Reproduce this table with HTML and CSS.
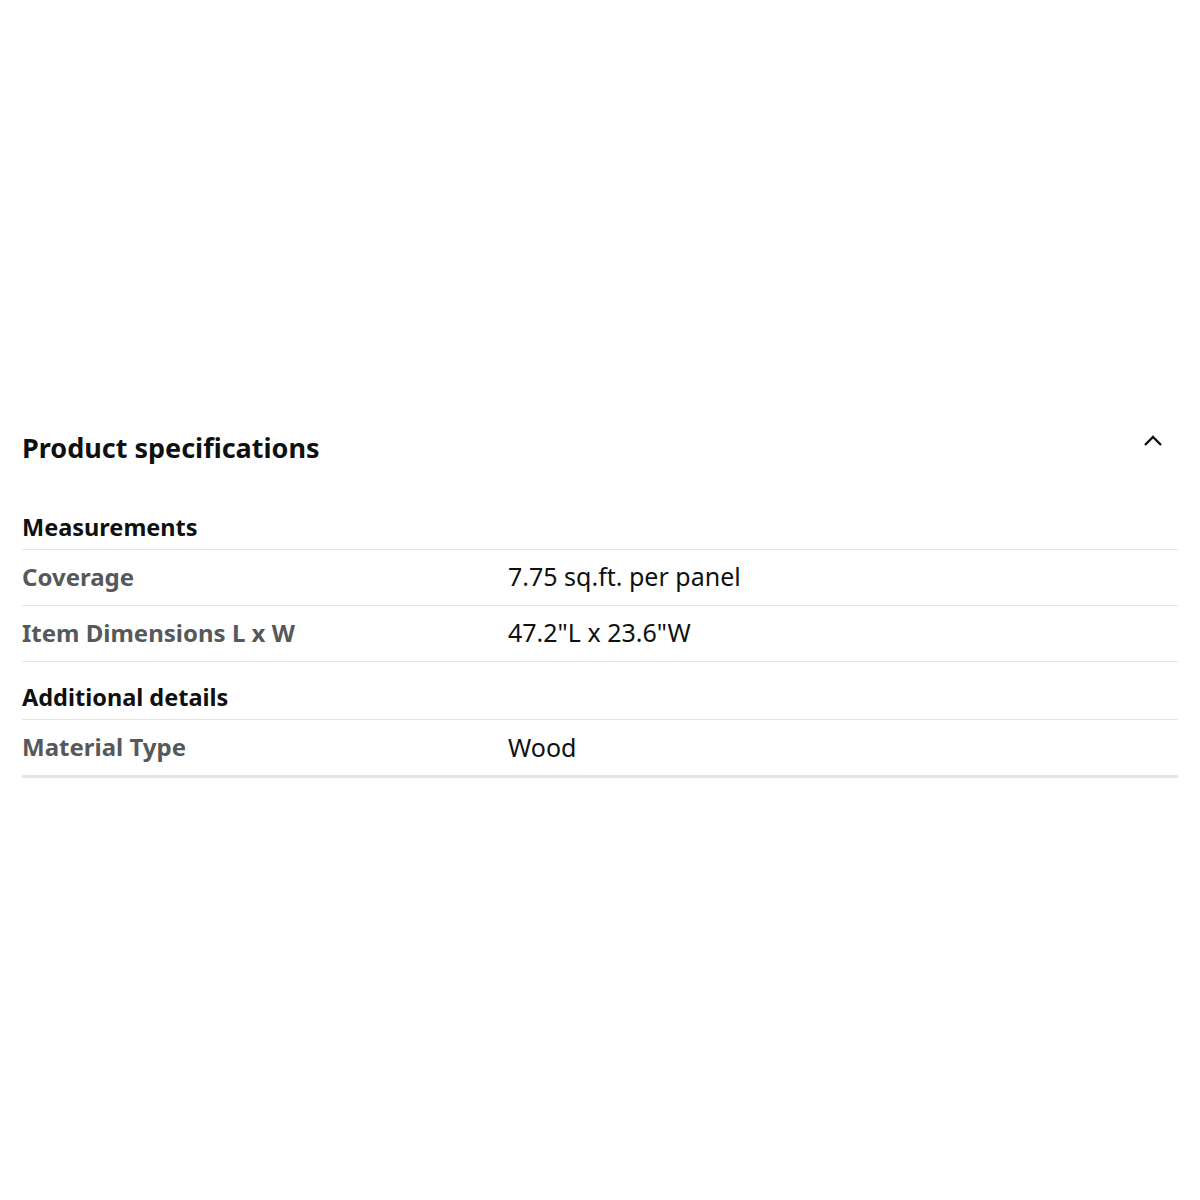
FILE: index.html
```html
<!DOCTYPE html>
<html>
<head>
<meta charset="utf-8">
<link rel="stylesheet" href="styles.css">
</head>
<body>
<div class="page">
  <section class="specs">
    <div class="specs-header">
      <h2 class="specs-title">Product specifications</h2>
      <svg class="chevron" width="22" height="14" viewBox="0 0 22 14"><path d="M3 12 L11 4 L19 12" fill="none" stroke="#0f1111" stroke-width="2.4"/></svg>
    </div>
    <div class="group">
      <h3 class="group-title">Measurements</h3>
      <div class="row"><span class="label">Coverage</span><span class="value">7.75 sq.ft. per panel</span></div>
      <div class="row"><span class="label">Item Dimensions L x W</span><span class="value">47.2"L x 23.6"W</span></div>
    </div>
    <div class="group">
      <h3 class="group-title">Additional details</h3>
      <div class="row last"><span class="label">Material Type</span><span class="value">Wood</span></div>
    </div>
  </section>
</div>
</body>
</html>
```
FILE: styles.css
```css
html, body { margin: 0; padding: 0; background: #fff; }
body { font-family: "Noto Sans", "Open Sans", sans-serif; color: #0f1111; }
.page { padding: 422px 22px 0 22px; }
.specs-header { display: flex; justify-content: space-between; align-items: flex-start; height: 70px; }
.specs-title { margin: 0; font-size: 27px; font-weight: 700; line-height: 52px; }
.chevron { margin: 11px 14px 0 0; }
.group-title { margin: 0; box-sizing: border-box; height: 58px; padding-top: 20px; font-size: 23.5px; font-weight: 700; line-height: 30px; border-bottom: 1px solid #e3e6e6; }
.row { display: grid; grid-template-columns: 486px 1fr; align-items: center; height: 56px; box-sizing: border-box; padding-bottom: 3px; border-bottom: 1px solid #e3e6e6; }
.row.last { height: 58px; padding-bottom: 2px; border-bottom: 3px solid #e3e6e6; }
.label { font-weight: 700; color: #565959; font-size: 24px; }
.value { color: #0f1111; font-size: 25px; }
```
